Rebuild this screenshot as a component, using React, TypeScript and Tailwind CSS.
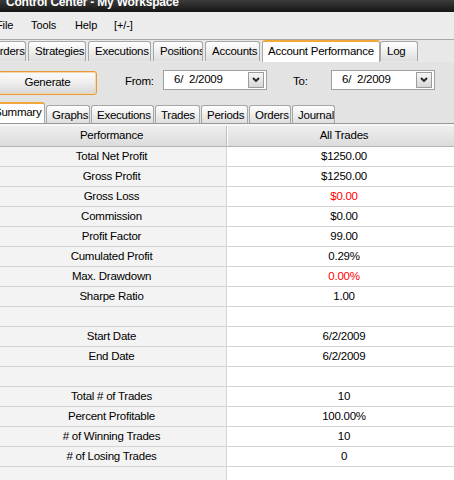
import React from "react";

const FONT = "font-['Liberation_Sans',Arial,sans-serif]";

function OuterTab({ label, w, active }: { label: string; w: string; active?: boolean }) {
  if (active) {
    return (
      <div className={`${w} h-[22px] shrink-0 bg-white border-t-[2px] border-t-[#f2a93b] border-x border-x-[#a8a8a8] rounded-t-[3px] pl-[5px] pt-[1px] leading-[16px] text-[11.5px] tracking-[-0.25px] text-black whitespace-nowrap`}>
        {label}
      </div>
    );
  }
  return (
    <div className={`${w} h-[20px] shrink-0 mb-[1px] bg-gradient-to-b from-white to-[#dedede] border border-b-0 border-[#a6a6a6] rounded-t-[3px] pl-[6px] leading-[19px] text-[11.5px] tracking-[-0.25px] text-black whitespace-nowrap overflow-hidden`}>
      {label}
    </div>
  );
}

function InnerTab({ label, w, active }: { label: string; w: string; active?: boolean }) {
  if (active) {
    return (
      <div className={`${w} h-[21px] shrink-0 bg-white border-t-[2px] border-t-[#f2a93b] border-r border-r-[#a8a8a8] rounded-t-[3px] pl-[4px] leading-[17px] text-[11.5px] tracking-[-0.25px] text-black whitespace-nowrap`}>
        {label}
      </div>
    );
  }
  return (
    <div className={`${w} h-[18px] shrink-0 bg-gradient-to-b from-white to-[#dedede] border border-b-0 border-[#a6a6a6] rounded-t-[3px] pl-[5px] leading-[18px] text-[11.5px] tracking-[-0.25px] text-black whitespace-nowrap overflow-hidden`}>
      {label}
    </div>
  );
}

function Chevron() {
  return (
    <svg width="8" height="6" viewBox="0 0 8 6">
      <polyline points="1,1 4,4 7,1" fill="none" stroke="#222" strokeWidth="1.8" />
    </svg>
  );
}

function DatePicker() {
  return (
    <div className="w-[104px] h-[20px] bg-white border border-[#a0a0a0] flex items-center justify-between">
      <span className="pl-[10px] text-[11.5px] tracking-[-0.25px] text-black whitespace-pre">{"6/  2/2009"}</span>
      <div className="w-[16px] h-[16px] mr-[2px] border border-[#9c9c9c] bg-gradient-to-b from-[#f6f6f6] to-[#d8d8d8] flex items-center justify-center">
        <Chevron />
      </div>
    </div>
  );
}

type Row = { label: string; value: string; red?: boolean };

const rows: Row[] = [
  { label: "Total Net Profit", value: "$1250.00" },
  { label: "Gross Profit", value: "$1250.00" },
  { label: "Gross Loss", value: "$0.00", red: true },
  { label: "Commission", value: "$0.00" },
  { label: "Profit Factor", value: "99.00" },
  { label: "Cumulated Profit", value: "0.29%" },
  { label: "Max. Drawdown", value: "0.00%", red: true },
  { label: "Sharpe Ratio", value: "1.00" },
  { label: "", value: "" },
  { label: "Start Date", value: "6/2/2009" },
  { label: "End Date", value: "6/2/2009" },
  { label: "", value: "" },
  { label: "Total # of Trades", value: "10" },
  { label: "Percent Profitable", value: "100.00%" },
  { label: "# of Winning Trades", value: "10" },
  { label: "# of Losing Trades", value: "0" },
  { label: "", value: "" },
];

export default function App() {
  return (
    <div className={`w-[454px] h-[480px] overflow-hidden bg-[#e3e3e3] ${FONT} text-black`}>
      {/* Title bar */}
      <div className="h-[12px] overflow-hidden bg-gradient-to-b from-[#3c3c3c] to-[#161616]">
        <div className="-mt-[4px] pl-[6px] text-[12px] font-bold leading-[12px] tracking-[-0.2px] text-white whitespace-nowrap">
          Control Center - My Workspace
        </div>
      </div>

      {/* Menu bar */}
      <div className="h-[28px] bg-[#ececec] border-b border-[#a9a9a9] flex items-center text-[11px] tracking-[-0.1px]">
        <span className="-ml-[4px] w-[35px]">File</span>
        <span className="w-[44px]">Tools</span>
        <span className="w-[39px]">Help</span>
        <span>[+/-]</span>
      </div>

      {/* Outer tabs */}
      <div className="h-[22px] bg-[#e8e8e8] flex items-end gap-[2px] -ml-[16px]">
        <OuterTab label="Orders" w="w-[42px]" />
        <OuterTab label="Strategies" w="w-[58px]" />
        <OuterTab label="Executions" w="w-[63px]" />
        <OuterTab label="Positions" w="w-[50px]" />
        <OuterTab label="Accounts" w="w-[55px]" />
        <div className="flex items-end">
          <OuterTab label="Account Performance" w="w-[118px]" active />
          <OuterTab label="Log" w="w-[38px]" />
        </div>
      </div>

      {/* Controls */}
      <div className="mt-[8px] h-[25px] flex items-start">
        <button className="-ml-[2px] mt-[1px] w-[99px] h-[24px] rounded-[3px] border border-[#e59a3a] bg-gradient-to-b from-[#fbfbfb] via-[#eeeeee] to-[#d6d6d6] shadow-[inset_0_0_0_1px_#f7d7a8] text-[11.5px] tracking-[-0.25px] text-black">
          Generate
        </button>
        <div className="ml-[28px] w-[38px] h-[24px] flex items-center text-[11.5px] tracking-[-0.25px]">From:</div>
        <DatePicker />
        <div className="ml-[26px] w-[38px] h-[24px] flex items-center text-[11.5px] tracking-[-0.25px]">To:</div>
        <DatePicker />
      </div>

      {/* Inner tabs */}
      <div className="mt-[6px] h-[22px] flex items-end gap-[1px] -ml-[10px]">
        <InnerTab label="Summary" w="w-[55px]" active />
        <InnerTab label="Graphs" w="w-[44px]" />
        <InnerTab label="Executions" w="w-[63px]" />
        <InnerTab label="Trades" w="w-[45px]" />
        <InnerTab label="Periods" w="w-[47px]" />
        <InnerTab label="Orders" w="w-[42px]" />
        <InnerTab label="Journal" w="w-[43px]" />
      </div>
      <div className="h-[2px] border-t border-[#9a9a9a] bg-[#f4f4f4]" />

      {/* Table */}
      <div className="-ml-[3px] w-[464px] text-[11.5px] tracking-[-0.25px]">
        <div className="h-[22px] flex border-t border-[#f8f8f8] border-b border-b-[#b4b4b4] bg-gradient-to-b from-[#eeeeee] to-[#dcdcdc]">
          <div className="w-[230px] flex items-center justify-center border-r border-[#bdbdbd] shadow-[1px_0_0_0_#ffffff]">Performance</div>
          <div className="flex-1 flex items-center justify-center">All Trades</div>
        </div>
        {rows.map((r, i) => (
          <div key={i} className="h-[20px] flex border-b border-[#d4d4d4]">
            <div className="w-[230px] bg-[#f3f3f3] border-r border-[#d4d4d4] flex items-center justify-center">{r.label}</div>
            <div className={`flex-1 bg-white flex items-center justify-center ${r.red ? "text-[#ff0000]" : "text-black"}`}>{r.value}</div>
          </div>
        ))}
      </div>
    </div>
  );
}
